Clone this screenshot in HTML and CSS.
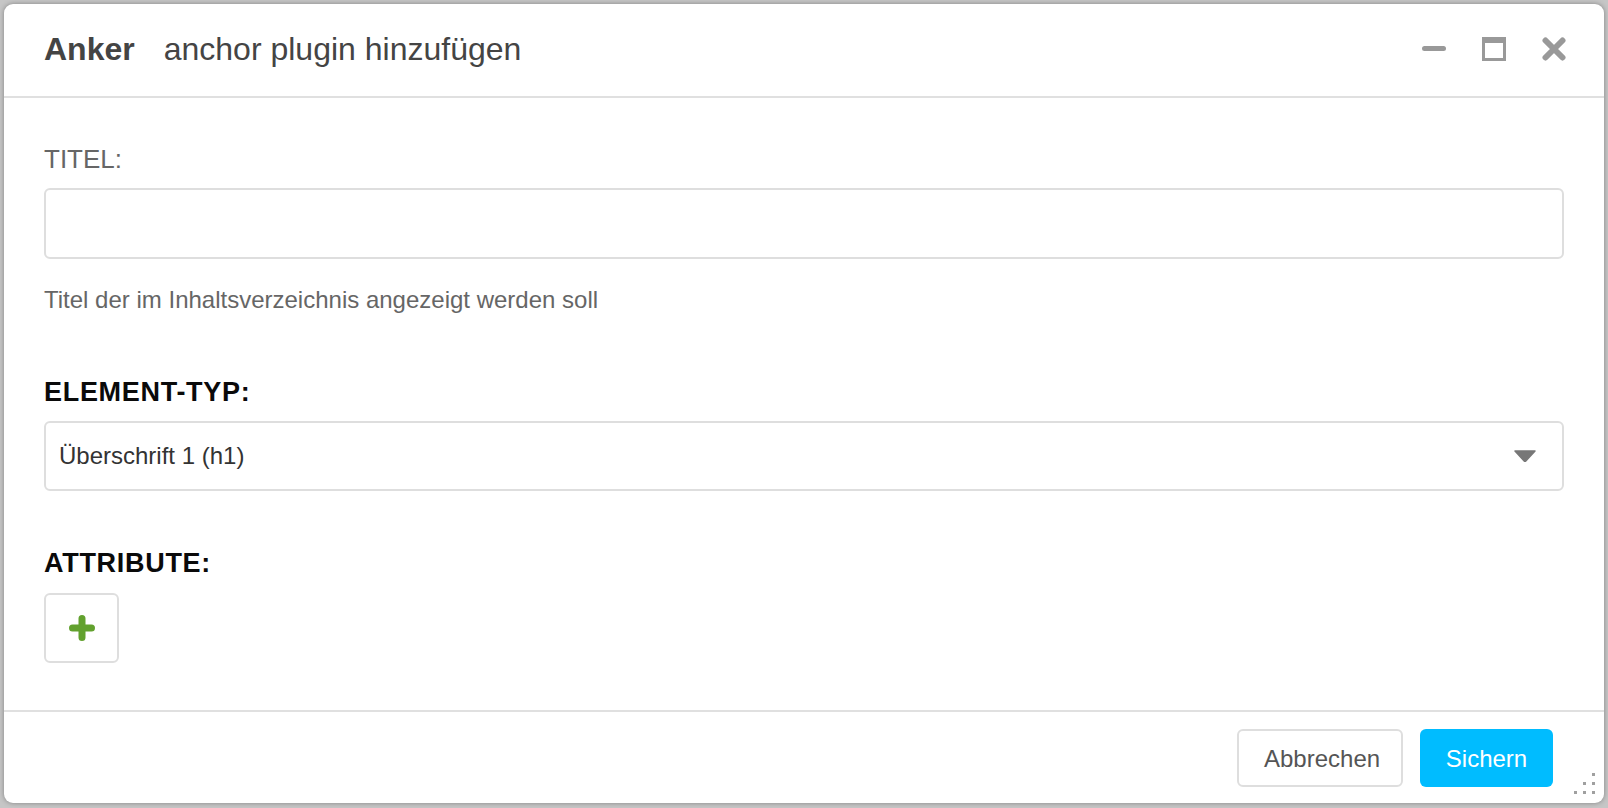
FILE: index.html
```html
<!DOCTYPE html>
<html lang="de">
<head>
<meta charset="utf-8">
<title>Anker</title>
<link rel="stylesheet" href="styles.css">
</head>
<body>
<div class="dialog">
  <header class="dlg-header">
    <h1 class="dlg-title"><span class="dlg-title-main">Anker</span><span class="dlg-title-sub">anchor plugin hinzufügen</span></h1>
    <div class="dlg-controls">
      <button class="ctl" aria-label="Minimieren">
        <svg width="24" height="24" viewBox="0 0 24 24"><rect x="0" y="9" width="24" height="5" rx="2.5" fill="#999"/></svg>
      </button>
      <button class="ctl" aria-label="Maximieren">
        <svg width="24" height="24" viewBox="0 0 24 24"><rect x="1.5" y="1.5" width="21" height="21" fill="none" stroke="#999" stroke-width="3"/><rect x="0" y="0" width="24" height="6" fill="#999"/></svg>
      </button>
      <button class="ctl" aria-label="Schließen">
        <svg width="24" height="24" viewBox="0 0 24 24"><path d="M3.5 3.5 L20.5 20.5 M20.5 3.5 L3.5 20.5" stroke="#999" stroke-width="6" stroke-linecap="round"/></svg>
      </button>
    </div>
  </header>

  <main class="dlg-body">
    <label class="field-label field-label--light" for="titel">TITEL:</label>
    <input class="text-input" id="titel" type="text">
    <p class="help-text">Titel der im Inhaltsverzeichnis angezeigt werden soll</p>

    <div class="field-label field-label--strong field-label--spaced">ELEMENT-TYP:</div>
    <div class="select-box" role="combobox" aria-expanded="false">
      <span class="select-value">Überschrift 1 (h1)</span>
      <svg class="select-arrow" width="22" height="12" viewBox="0 0 22 12"><path d="M1 1 L21 1 L11.8 11 Q11 11.8 10.2 11 Z" fill="#777" stroke="#777" stroke-width="1.5" stroke-linejoin="round"/></svg>
    </div>

    <div class="field-label field-label--strong field-label--spaced2">ATTRIBUTE:</div>
    <button class="add-btn" aria-label="Attribut hinzufügen">
      <svg width="26" height="26" viewBox="0 0 26 26"><path d="M13 3.5 V22.5 M3.5 13 H22.5" stroke="#62a12e" stroke-width="7" stroke-linecap="round"/></svg>
    </button>
  </main>

  <footer class="dlg-footer">
    <button class="btn btn--default">Abbrechen</button>
    <button class="btn btn--primary">Sichern</button>
    <svg class="grip" width="22" height="22" viewBox="0 0 22 22">
      <rect x="18" y="0" width="3" height="3" fill="#a0a0a0"/>
      <rect x="9" y="9" width="3" height="3" fill="#a0a0a0"/>
      <rect x="18" y="9" width="3" height="3" fill="#a0a0a0"/>
      <rect x="0" y="18" width="3" height="3" fill="#a0a0a0"/>
      <rect x="9" y="18" width="3" height="3" fill="#a0a0a0"/>
      <rect x="18" y="18" width="3" height="3" fill="#a0a0a0"/>
    </svg>
  </footer>
</div>
</body>
</html>
```

FILE: styles.css
```css
* {
  box-sizing: border-box;
}

html, body {
  margin: 0;
  height: 808px;
}

body {
  padding: 4px;
  background: #c6c6c6;
  font-family: "Liberation Sans", Arial, Helvetica, sans-serif;
  overflow: hidden;
}

.dialog {
  position: relative;
  width: 1600px;
  height: 799px;
  background: #fff;
  border-radius: 9px;
  box-shadow: 0 0 5px rgba(0, 0, 0, 0.35);
  display: flex;
  flex-direction: column;
  overflow: hidden;
}

/* Header */
.dlg-header {
  height: 94px;
  flex: none;
  display: flex;
  align-items: center;
  justify-content: space-between;
  padding: 0 38px 2px 40px;
  border-bottom: 2px solid #e0e0e0;
}

.dlg-title {
  margin: 0;
  font-size: 32px;
  font-weight: normal;
  color: #444;
  line-height: 36px;
  white-space: nowrap;
}

.dlg-title-main {
  font-weight: bold;
}

.dlg-title-sub {
  margin-left: 29px;
}

.dlg-controls {
  display: flex;
  gap: 36px;
  align-items: center;
}

.ctl {
  border: 0;
  background: none;
  padding: 0;
  width: 24px;
  height: 24px;
  display: block;
  cursor: pointer;
}

.ctl svg {
  display: block;
}

/* Body */
.dlg-body {
  flex: 1;
  display: flex;
  flex-direction: column;
  align-items: flex-start;
  padding: 46px 40px 0;
}

.field-label {
  display: block;
  font-size: 26px;
  line-height: 30px;
  height: 30px;
}

.field-label--light {
  color: #666;
}

.field-label--strong {
  font-size: 27px;
  letter-spacing: 0.7px;
  font-weight: bold;
  color: #0a0a0a;
}

.field-label--spaced {
  margin-top: 63px;
}

.field-label--spaced2 {
  margin-top: 57px;
}

.text-input {
  margin-top: 14px;
  width: 100%;
  height: 71px;
  border: 2px solid #dedede;
  border-radius: 6px;
  font: inherit;
  font-size: 24px;
  padding: 0 14px;
  outline: none;
}

.help-text {
  margin: 27px 0 0;
  font-size: 24px;
  line-height: 28px;
  color: #666;
}

.select-box {
  margin-top: 14px;
  width: 100%;
  height: 70px;
  border: 2px solid #dedede;
  border-radius: 6px;
  display: flex;
  align-items: center;
  justify-content: space-between;
  padding: 0 26px 0 13px;
}

.select-value {
  font-size: 24px;
  color: #333;
}

.select-arrow {
  display: block;
}

.add-btn {
  margin-top: 15px;
  width: 75px;
  height: 70px;
  border: 2px solid #dedede;
  border-radius: 6px;
  background: #fff;
  display: flex;
  align-items: center;
  justify-content: center;
  padding: 0;
  cursor: pointer;
}

.add-btn svg {
  display: block;
}

/* Footer */
.dlg-footer {
  flex: none;
  height: 93px;
  border-top: 2px solid #e0e0e0;
  display: flex;
  align-items: center;
  justify-content: flex-end;
  gap: 17px;
  padding: 0 51px 0 0;
}

.btn {
  height: 58px;
  border-radius: 6px;
  font-family: inherit;
  font-size: 24px;
  padding: 2px 25px 0;
  cursor: pointer;
}

.btn--default {
  background: #fff;
  color: #555;
  border: 2px solid #dedede;
  width: 166px;
}

.btn--primary {
  background: #00bcff;
  color: #fff;
  border: 0;
  width: 133px;
}

.grip {
  position: absolute;
  right: 8px;
  bottom: 8px;
}
```
